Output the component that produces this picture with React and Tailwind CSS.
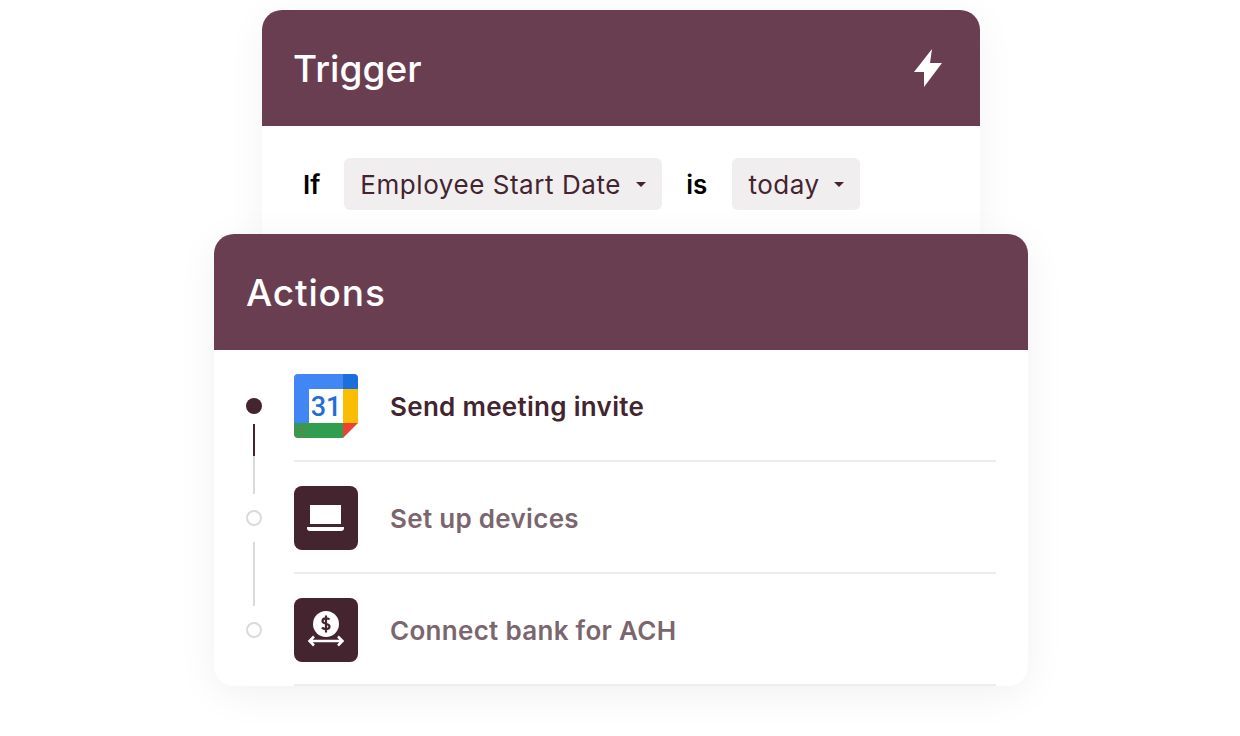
const fontFamily = 'font-[Inter,"Liberation_Sans",sans-serif]';

const Caret = () => (
    <svg width="10" height="5" viewBox="0 0 10 5" className="shrink-0">
        <path d="M0 0h10L5 5z" fill="#43242f" />
    </svg>
);

const Pill = ({ label, width }) => (
    <div className={`flex h-[52px] items-center justify-between rounded-md bg-[#f0eeef] pl-4 pr-4 text-[26px] font-normal tracking-[0.55px] text-[#43242f] ${width}`}>
        {label}
        <Caret />
    </div>
);

const CalendarIcon = () => (
    <svg width="64" height="64" viewBox="0 0 64 64">
        <defs>
            <pattern id="dots" width="3" height="3" patternUnits="userSpaceOnUse">
                <rect width="1" height="1" fill="#b0564f" />
            </pattern>
        </defs>
        <path d="M4 0h45v15H15v34H0V4a4 4 0 0 1 4-4z" fill="#4285f4" />
        <path d="M49 0h11a4 4 0 0 1 4 4v11H49z" fill="#1a6fdc" />
        <rect x="49" y="15" width="15" height="34" fill="#fbbc04" />
        <path d="M49 64V49h15z" fill="#ea4335" />
        <rect x="15" y="49" width="34" height="15" fill="#2f9e4f" />
        <path d="M0 49h15v15H4a4 4 0 0 1-4-4z" fill="#2f9e4f" />
        <path d="M0 49h15v15H4a4 4 0 0 1-4-4z" fill="url(#dots)" />
        <rect x="15" y="15" width="34" height="34" fill="#fff" />
        <text x="32" y="42" textAnchor="middle" fontSize="27" fontWeight="500" fill="#1f6fd6" fontFamily="Roboto, sans-serif">31</text>
    </svg>
);

const LaptopIcon = () => (
    <div className="h-16 w-16 overflow-hidden rounded-lg bg-[#43242f]">
        <svg width="64" height="64" viewBox="0 0 64 64">
            <rect x="16" y="19" width="31" height="19" fill="#fff" />
            <path d="M13 41h37v1a3 3 0 0 1-3 3H16a3 3 0 0 1-3-3z" fill="#fff" />
        </svg>
    </div>
);

const BankIcon = () => (
    <div className="h-16 w-16 overflow-hidden rounded-lg bg-[#43242f]">
        <svg width="64" height="64" viewBox="0 0 64 64">
            <circle cx="32" cy="26" r="13" fill="#fff" />
            <path d="M35.500 21.500c-1-1.500-7-2-7 1.500 0 3.500 7 2 7 5.500 0 3.500-6 3-7.500 1M32 17.500v17" stroke="#43242f" strokeWidth="2.200" fill="none" />
            <path d="M16 43h32M20 38.500L15.500 43l4.500 4.500M44 38.500l4.500 4.500-4.500 4.500" stroke="#fff" strokeWidth="2.500" fill="none" />
        </svg>
    </div>
);

const steps = [
    { label: 'Send meeting invite', icon: <CalendarIcon />, active: true },
    { label: 'Set up devices', icon: <LaptopIcon /> },
    { label: 'Connect bank for ACH', icon: <BankIcon /> },
];

const Header = ({ title, titleClass, children }) => (
    <div className="flex h-[116px] items-center justify-between rounded-t-[20px] bg-[#683e50] px-8 text-white">
        <h2 className={`pt-0.5 text-[37px] font-medium ${titleClass}`}>{title}</h2>
        {children}
    </div>
);

const Circle = () => <div className="h-4 w-4 rounded-full border-2 border-[#ddd8da]" />;

export default function App() {
    return (
        <div className={`flex h-[736px] w-[1240px] flex-col items-center overflow-hidden bg-white pl-[2px] pt-[10px] ${fontFamily}`}>
            {/* Trigger */}
            <div className="w-[718px] rounded-t-[20px] bg-white shadow-[0_8px_40px_rgba(0,0,0,0.05)]">
                <Header title="Trigger" titleClass="-ml-px tracking-[0.1px]">
                    <svg width="28" height="38" viewBox="0 0 28 38" className="mr-[6px]">
                        <path d="M18 0L0 23h10v15L28 14H16z" fill="#fff" />
                    </svg>
                </Header>
                <div className="flex h-[108px] items-start gap-6 pl-[41px] pt-8 text-[26px] font-semibold text-black">
                    <span className="flex h-[52px] items-center">If</span>
                    <Pill label="Employee Start Date" width="w-[318px]" />
                    <span className="flex h-[52px] items-center">is</span>
                    <Pill label="today" width="ml-px w-[128px]" />
                </div>
            </div>

            {/* Actions */}
            <div className="relative w-[814px] rounded-[20px] bg-white shadow-[0_8px_40px_rgba(0,0,0,0.06)]">
                <Header title="Actions" titleClass="tracking-[0.85px]" />
                <div className="flex">
                    <div className="flex w-20 flex-col items-center pt-12">
                        <div className="h-4 w-4 rounded-full bg-[#43242f]" />
                        <div className="mt-[10px] h-8 w-0.5 bg-[#43242f]" />
                        <div className="h-[38px] w-0.5 bg-[#ddd8da]" />
                        <div className="mt-4"><Circle /></div>
                        <div className="mt-4 h-16 w-0.5 bg-[#ddd8da]" />
                        <div className="mt-4"><Circle /></div>
                    </div>
                    <div className="mr-8 flex-1">
                        {steps.map((step) => (
                            <div key={step.label} className="flex h-28 items-center gap-8 border-b-2 border-[#eeecec] pt-0.5">
                                {step.icon}
                                <span className={`text-[26px] font-semibold tracking-[0.3px] ${step.active ? 'text-[#43242f]' : 'text-[#7b666e]'}`}>
                                    {step.label}
                                </span>
                            </div>
                        ))}
                    </div>
                </div>
            </div>
        </div>
    );
}
